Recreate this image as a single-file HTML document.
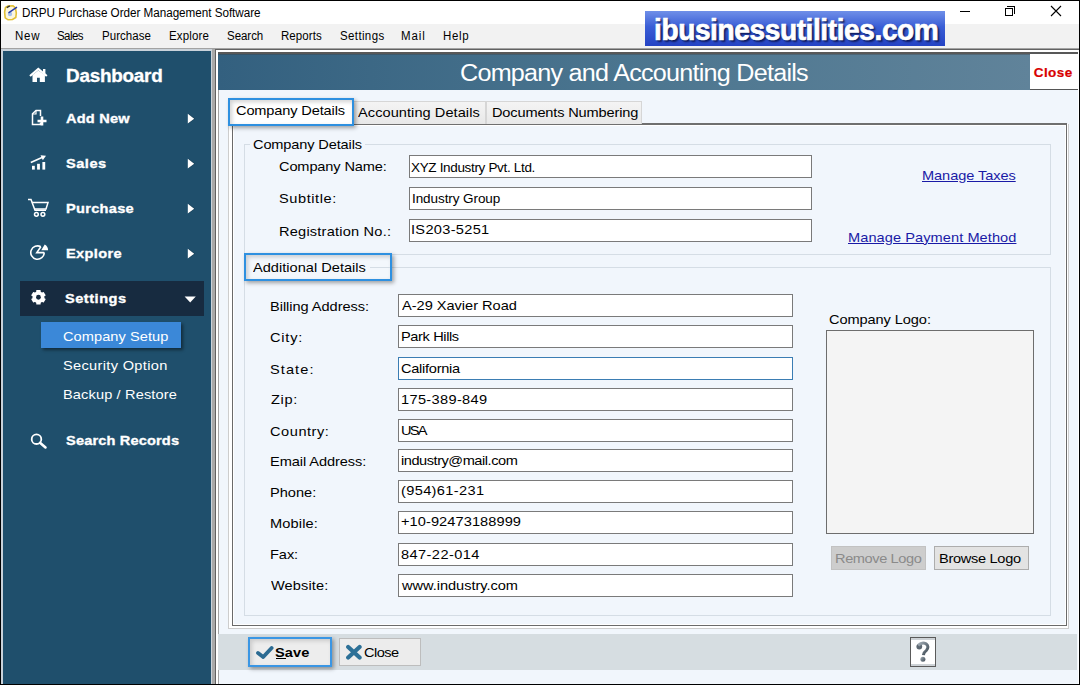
<!DOCTYPE html>
<html><head><meta charset="utf-8">
<style>
*{box-sizing:border-box;margin:0;padding:0}
html,body{width:1080px;height:685px;overflow:hidden;background:#fff}
body{position:relative;font-family:"Liberation Sans", sans-serif}
.a{position:absolute}
.t{position:absolute;white-space:pre;line-height:1;font-family:"Liberation Sans", sans-serif}
.inp{position:absolute;background:#fff;border:1px solid #7a7a7a}
</style></head><body>
<!-- frame -->
<div class="a" style="left:0;top:0;width:1080px;height:685px;background:#000"></div>
<div class="a" style="left:1px;top:1px;width:1078px;height:23px;background:#fff"></div>
<div class="a" style="left:1px;top:24px;width:1078px;height:24px;background:#f2f2f2"></div>
<div class="a" style="left:1px;top:48px;width:1078px;height:1px;background:#a3a3a3"></div>
<div class="a" style="left:1px;top:49px;width:1078px;height:635px;background:#c9d2da"></div>
<!-- sidebar -->
<div class="a" style="left:3px;top:51px;width:208px;height:633px;background:#1f4f6c"></div>
<div class="a" style="left:212px;top:49px;width:3px;height:635px;background:#a9a9a9"></div>
<div class="a" style="left:215px;top:49px;width:864px;height:635px;background:#626262"></div>
<div class="a" style="left:216px;top:50px;width:863px;height:634px;background:#fff"></div>
<!-- main content -->
<div class="a" style="left:218px;top:53px;width:860px;height:631px;background:#f1f6fc"></div>
<div class="a" style="left:218px;top:52px;width:812px;height:38px;background:linear-gradient(90deg,#33607f 0%,#4b758f 50%,#60839a 100%)"></div>
<div class="a" style="left:218px;top:52px;width:860px;height:2px;background:#585858"></div>
<div class="a" style="left:218px;top:54px;width:860px;height:1px;background:rgba(60,60,60,.35)"></div>
<div class="a" style="left:1030px;top:54px;width:48px;height:36px;background:#fff;border-bottom:1px solid #555"></div>
<div class="a" style="left:218px;top:90px;width:1px;height:594px;background:#a4a4a4"></div>
<!-- tab panel -->
<div class="a" style="left:228px;top:124px;width:841px;height:505px;border:1px solid #cdcdcd;border-top:none;background:#fff"></div>
<div class="a" style="left:232px;top:123px;width:835px;height:503px;border:1px solid #6a6a6a;border-top:2px solid #6f6f6f;background:#f1f6fc;box-shadow:inset 1px 1px 0 #fff, inset -1px -1px 0 #fff"></div>
<!-- tabs -->
<div class="a" style="left:353px;top:101px;width:133px;height:23px;background:linear-gradient(#f4f4f4,#e8e8e8);border:1px solid #d6d6d6;border-bottom:none"></div>
<div class="a" style="left:486px;top:101px;width:156px;height:23px;background:linear-gradient(#f4f4f4,#e8e8e8);border:1px solid #d6d6d6;border-bottom:none"></div>
<div class="a" style="left:228px;top:98px;width:126px;height:28px;background:#fff;border:2.5px solid #2e90e0;box-shadow:2px 2px 4px rgba(0,0,0,.35), inset 2px 2px 4px rgba(0,0,0,.18)"></div>
<!-- group boxes -->
<div class="a" style="left:244px;top:144px;width:807px;height:111px;border:1px solid #d5dde5"></div>
<div class="a" style="left:250px;top:140px;width:115px;height:8px;background:#f1f6fc"></div>
<div class="a" style="left:244px;top:267px;width:807px;height:349px;border:1px solid #d5dde5"></div>
<div class="a" style="left:244px;top:253px;width:148px;height:28px;background:#f3f7fc;border:2.5px solid #2e90e0;box-shadow:2px 2px 4px rgba(0,0,0,.35), inset 2px 2px 4px rgba(0,0,0,.18)"></div>
<div class="a" style="left:370px;top:267px;width:20px;height:1px;background:#d5dde5"></div>
<!-- company inputs -->
<div class="inp" style="left:409px;top:155px;width:403px;height:23px"></div>
<div class="inp" style="left:409px;top:187px;width:403px;height:23px"></div>
<div class="inp" style="left:409px;top:219px;width:403px;height:23px"></div>
<!-- additional inputs -->
<div class="inp" style="left:398px;top:294px;width:395px;height:23px"></div>
<div class="inp" style="left:398px;top:325px;width:395px;height:23px"></div>
<div class="inp" style="left:398px;top:357px;width:395px;height:23px;border-color:#3b7db3"></div>
<div class="inp" style="left:398px;top:388px;width:395px;height:23px"></div>
<div class="inp" style="left:398px;top:419px;width:395px;height:23px"></div>
<div class="inp" style="left:398px;top:449px;width:395px;height:23px"></div>
<div class="inp" style="left:398px;top:480px;width:395px;height:23px"></div>
<div class="inp" style="left:398px;top:511px;width:395px;height:23px"></div>
<div class="inp" style="left:398px;top:543px;width:395px;height:23px"></div>
<div class="inp" style="left:398px;top:574px;width:395px;height:23px"></div>
<!-- logo -->
<div class="a" style="left:826px;top:330px;width:208px;height:204px;background:#f4f4f4;border:1px solid #6d6d6d"></div>
<div class="a" style="left:831px;top:546px;width:95px;height:24px;background:#cdcdcd;border:1px solid #c2c2c2"></div>
<div class="a" style="left:934px;top:546px;width:95px;height:24px;background:#e3e3e3;border:1px solid #adadad"></div>
<!-- bottom bar -->
<div class="a" style="left:218px;top:634px;width:859px;height:36px;background:#d6dde1"></div>
<div class="a" style="left:248px;top:637px;width:84px;height:30px;background:#ededed;border:2.5px solid #3a96e4;box-shadow:2px 2px 4px rgba(0,0,0,.35), inset 2px 2px 4px rgba(0,0,0,.15)"></div>
<div class="a" style="left:339px;top:638px;width:82px;height:28px;background:#ececec;border:1px solid #bdbdbd"></div>
<div class="a" style="left:910px;top:637px;width:26px;height:30px;background:#fff;border:1px solid #5a5a5a"></div>
<!-- sidebar highlights -->
<div class="a" style="left:20px;top:281px;width:184px;height:35px;background:#172b40"></div>
<div class="a" style="left:41px;top:322px;width:140px;height:26px;background:#3b88d8;box-shadow:2px 2px 3px rgba(0,0,0,.45)"></div>
<!-- logo banner -->
<div class="a" style="left:645px;top:11px;width:300px;height:35px;background:linear-gradient(#6f8fe8,#3a5ed6 45%,#2443c4)"></div>
<!-- window controls -->
<div class="a" style="left:960px;top:11px;width:10px;height:1px;background:#000"></div>
<div class="a" style="left:1005px;top:8px;width:8px;height:8px;border:1px solid #000"></div>
<div class="a" style="left:1007px;top:6px;width:8px;height:8px;border-top:1px solid #000;border-right:1px solid #000"></div>
<svg class="a" style="left:1050px;top:5px" width="12" height="12" viewBox="0 0 12 12"><path d="M1 1L11 11M11 1L1 11" stroke="#000" stroke-width="1.1"/></svg>

<!-- app icon -->
<svg class="a" style="left:2px;top:3px" width="17" height="18" viewBox="0 0 17 18">
<path d="M3.5 4.5 L6 3 L11 2.8 L13.5 5 L14.3 10 L13.8 14.5 L10.5 16.5 L6 16.8 L3.2 14.8 L2.6 9Z" fill="#fbf6e0" stroke="#e2c035" stroke-width="1.6"/>
<path d="M4.8 4.6 L7.8 2.8" stroke="#333" stroke-width="1.4"/>
<circle cx="8" cy="11" r="2.2" fill="#a9c3ec"/>
<path d="M6.5 9.8 L15 4.2" stroke="#2438a8" stroke-width="1.4"/>
</svg>
<!-- sidebar icons -->
<svg class="a" style="left:28px;top:66px" width="22" height="18" viewBox="0 0 22 18">
<path d="M2 10 L10.3 3 L18.8 10" fill="none" stroke="#fff" stroke-width="2.2" stroke-linejoin="miter"/>
<rect x="15" y="3" width="2.4" height="5" fill="#fff"/>
<path d="M4.5 9 L10.3 4.6 L16.9 9 L16.9 16 L11.8 16 L11.8 11.8 L9 11.8 L9 16 L4.5 16Z" fill="#fff"/>
</svg>
<svg class="a" style="left:30px;top:108px" width="20" height="20" viewBox="0 0 20 20">
<path d="M10.5 14.5 L10.5 16.5 L2.5 16.5 L2.5 5.8 L6 2.5 L10.5 2.5 L10.5 8" fill="none" stroke="#fff" stroke-width="1.5"/>
<path d="M2.5 6 L6 6 L6 2.5" fill="none" stroke="#fff" stroke-width="1.2"/>
<path d="M12 8.5 L12 17.5 M7.5 13 L16.5 13" stroke="#fff" stroke-width="2.6"/>
</svg>
<svg class="a" style="left:29px;top:154px" width="20" height="18" viewBox="0 0 20 18">
<rect x="3" y="11.8" width="2.8" height="3.8" fill="#fff"/>
<rect x="8.1" y="9.8" width="2.8" height="5.8" fill="#fff"/>
<rect x="13.4" y="8" width="2.8" height="7.6" fill="#fff"/>
<path d="M1.8 8.5 L13 3.6" stroke="#fff" stroke-width="1.6"/>
<path d="M11.5 1.2 L17 1.8 L13.8 6.2Z" fill="#fff"/>
</svg>
<svg class="a" style="left:26px;top:197px" width="24" height="22" viewBox="0 0 24 22">
<path d="M2 2.5 L5 2.5 L9 13.2 L20 13.2" fill="none" stroke="#fff" stroke-width="1.5"/>
<path d="M5.8 5.6 L22 5.6 L20 12 L8.2 12" fill="none" stroke="#fff" stroke-width="1.5"/>
<circle cx="10.4" cy="17.3" r="1.9" fill="none" stroke="#fff" stroke-width="1.5"/>
<circle cx="16.9" cy="17.3" r="1.9" fill="none" stroke="#fff" stroke-width="1.5"/>
</svg>
<svg class="a" style="left:27px;top:242px" width="24" height="22" viewBox="0 0 24 22">
<path d="M13.85 4.8 A6.7 6.7 0 1 0 17.2 10.6" fill="none" stroke="#fff" stroke-width="1.6"/>
<path d="M13.85 4.8 L9.8 10.6 L17.2 10.6" fill="none" stroke="#fff" stroke-width="1.6" stroke-linejoin="miter"/>
<path d="M14.3 8.3 L21.1 8.3 A6.8 6.8 0 0 0 17.7 2.4Z" fill="#fff"/>
</svg>
<svg class="a" style="left:29px;top:288px" width="19" height="19" viewBox="0 0 19 19">
<g transform="translate(9.45,9.25)" fill="#fff">
<rect x="-2.2" y="-7.2" width="4.4" height="14.4" rx="0.5"/>
<rect x="-2.2" y="-7.2" width="4.4" height="14.4" rx="0.5" transform="rotate(60)"/>
<rect x="-2.2" y="-7.2" width="4.4" height="14.4" rx="0.5" transform="rotate(120)"/>
<circle r="5.9"/>
</g>
<circle cx="9.45" cy="9.25" r="2.4" fill="#172b40"/>
</svg>
<svg class="a" style="left:28px;top:432px" width="22" height="20" viewBox="0 0 22 20">
<circle cx="8.5" cy="7.2" r="4.8" fill="none" stroke="#fff" stroke-width="1.8"/>
<path d="M12 10.8 L17.5 15.4" stroke="#fff" stroke-width="2.6" stroke-linecap="round"/>
</svg>
<!-- arrows -->
<svg class="a" style="left:186px;top:112px" width="10" height="14" viewBox="0 0 10 14"><path d="M2.6 1.8 L9 6.7 L2.6 11.6Z" fill="#0f2a3d" opacity=".55"/><path d="M1.8 1.8 L8.2 6.7 L1.8 11.6Z" fill="#fff"/></svg>
<svg class="a" style="left:186px;top:157px" width="10" height="14" viewBox="0 0 10 14"><path d="M2.6 1.8 L9 6.7 L2.6 11.6Z" fill="#0f2a3d" opacity=".55"/><path d="M1.8 1.8 L8.2 6.7 L1.8 11.6Z" fill="#fff"/></svg>
<svg class="a" style="left:186px;top:202px" width="10" height="14" viewBox="0 0 10 14"><path d="M2.6 1.8 L9 6.7 L2.6 11.6Z" fill="#0f2a3d" opacity=".55"/><path d="M1.8 1.8 L8.2 6.7 L1.8 11.6Z" fill="#fff"/></svg>
<svg class="a" style="left:186px;top:247px" width="10" height="14" viewBox="0 0 10 14"><path d="M2.6 1.8 L9 6.7 L2.6 11.6Z" fill="#0f2a3d" opacity=".55"/><path d="M1.8 1.8 L8.2 6.7 L1.8 11.6Z" fill="#fff"/></svg>
<svg class="a" style="left:183px;top:294px" width="14" height="10" viewBox="0 0 14 10"><path d="M1.6 2.5 L12.8 2.5 L7.2 8.6Z" fill="#fff"/></svg>
<!-- save / close icons -->
<svg class="a" style="left:255px;top:645px" width="19" height="15" viewBox="0 0 19 15">
<path d="M3 7.9 L8.2 12 L16.6 3" fill="none" stroke="#2c6b92" stroke-width="3.8" stroke-linecap="round" stroke-linejoin="round"/>
</svg>
<svg class="a" style="left:345px;top:644px" width="18" height="16" viewBox="0 0 18 16">
<path d="M3.2 3 L14.6 13.5 M14.6 3 L3.2 13.5" stroke="#2c7097" stroke-width="4.2" stroke-linecap="round"/>
</svg>
<div class="a" style="left:276px;top:658px;width:10px;height:1px;background:#000"></div>
<!-- help icon -->
<div class="a" style="left:911px;top:638px;width:24px;height:28px;border-top:2px solid #cdd2d6;border-bottom:2px solid #cdd2d6"></div>
<svg class="a" style="left:914px;top:641px" width="18" height="22" viewBox="0 0 18 22">
<defs><linearGradient id="hg" x1="0" y1="0" x2="1" y2="1"><stop offset="0" stop-color="#a4aeb6"/><stop offset="0.5" stop-color="#6c7882"/><stop offset="1" stop-color="#3e4a54"/></linearGradient></defs>
<circle cx="5.3" cy="5.6" r="2.9" fill="#5d6872"/>
<path d="M4.2 4.4 Q8 0.6 12 2.8 Q15.6 5.6 12.4 9.4 Q9.6 11.4 9.4 14.2" fill="none" stroke="url(#hg)" stroke-width="3"/>
<circle cx="8.9" cy="18.3" r="2.5" fill="url(#hg)"/>
</svg>
<div class="t" style="left:22.30px;top:6.59px;font-size:12.3px;font-weight:400;color:#000;letter-spacing:-0.028px;transform:scaleX(0.95);transform-origin:0 0;">DRPU Purchase Order Management Software</div>
<div class="t" style="left:654.00px;top:16.45px;font-size:29px;font-weight:700;color:#fff;letter-spacing:-0.442px;transform:scaleX(0.97);transform-origin:0 0;text-shadow:1px 1px 1px #0a1a60,2px 2px 2px rgba(0,0,30,.6);-webkit-text-stroke:0.7px #fff">ibusinessutilities.com</div>
<div class="t" style="left:14.60px;top:29.92px;font-size:12.5px;font-weight:400;color:#000;letter-spacing:0.870px;transform:scaleX(0.92);transform-origin:0 0;">New</div>
<div class="t" style="left:57.30px;top:29.92px;font-size:12.5px;font-weight:400;color:#000;letter-spacing:-0.598px;transform:scaleX(0.92);transform-origin:0 0;">Sales</div>
<div class="t" style="left:102.20px;top:29.92px;font-size:12.5px;font-weight:400;color:#000;letter-spacing:0.062px;transform:scaleX(0.92);transform-origin:0 0;">Purchase</div>
<div class="t" style="left:169.30px;top:29.92px;font-size:12.5px;font-weight:400;color:#000;letter-spacing:0.145px;transform:scaleX(0.92);transform-origin:0 0;">Explore</div>
<div class="t" style="left:227.20px;top:29.92px;font-size:12.5px;font-weight:400;color:#000;letter-spacing:-0.043px;transform:scaleX(0.92);transform-origin:0 0;">Search</div>
<div class="t" style="left:281.20px;top:29.92px;font-size:12.5px;font-weight:400;color:#000;letter-spacing:0.072px;transform:scaleX(0.92);transform-origin:0 0;">Reports</div>
<div class="t" style="left:339.70px;top:29.92px;font-size:12.5px;font-weight:400;color:#000;letter-spacing:0.404px;transform:scaleX(0.92);transform-origin:0 0;">Settings</div>
<div class="t" style="left:400.90px;top:29.92px;font-size:12.5px;font-weight:400;color:#000;letter-spacing:1.014px;transform:scaleX(0.92);transform-origin:0 0;">Mail</div>
<div class="t" style="left:443.00px;top:29.92px;font-size:12.5px;font-weight:400;color:#000;letter-spacing:0.725px;transform:scaleX(0.92);transform-origin:0 0;">Help</div>
<div class="t" style="left:65.60px;top:67.69px;font-size:17.5px;font-weight:700;color:#fff;letter-spacing:-0.231px;transform:scaleX(1.08);transform-origin:0 0;-webkit-text-stroke:0.3px #fff">Dashboard</div>
<div class="t" style="left:65.60px;top:112.07px;font-size:13.5px;font-weight:700;color:#fff;letter-spacing:0.185px;transform:scaleX(1.08);transform-origin:0 0;-webkit-text-stroke:0.35px #fff">Add New</div>
<div class="t" style="left:65.50px;top:156.87px;font-size:13.5px;font-weight:700;color:#fff;letter-spacing:0.463px;transform:scaleX(1.08);transform-origin:0 0;-webkit-text-stroke:0.35px #fff">Sales</div>
<div class="t" style="left:65.50px;top:201.87px;font-size:13.5px;font-weight:700;color:#fff;letter-spacing:0.265px;transform:scaleX(1.08);transform-origin:0 0;-webkit-text-stroke:0.35px #fff">Purchase</div>
<div class="t" style="left:65.50px;top:246.57px;font-size:13.5px;font-weight:700;color:#fff;letter-spacing:0.340px;transform:scaleX(1.08);transform-origin:0 0;-webkit-text-stroke:0.35px #fff">Explore</div>
<div class="t" style="left:65.00px;top:291.87px;font-size:13.5px;font-weight:700;color:#fff;letter-spacing:0.476px;transform:scaleX(1.08);transform-origin:0 0;-webkit-text-stroke:0.35px #fff">Settings</div>
<div class="t" style="left:63.40px;top:329.57px;font-size:13.5px;font-weight:400;color:#fff;letter-spacing:0.062px;transform:scaleX(1.08);transform-origin:0 0;">Company Setup</div>
<div class="t" style="left:63.40px;top:358.87px;font-size:13.5px;font-weight:400;color:#fff;letter-spacing:0.304px;transform:scaleX(1.08);transform-origin:0 0;">Security Option</div>
<div class="t" style="left:63.40px;top:388.37px;font-size:13.5px;font-weight:400;color:#fff;letter-spacing:0.123px;transform:scaleX(1.08);transform-origin:0 0;">Backup / Restore</div>
<div class="t" style="left:65.50px;top:434.37px;font-size:13.5px;font-weight:700;color:#fff;letter-spacing:0.142px;transform:scaleX(1.08);transform-origin:0 0;-webkit-text-stroke:0.35px #fff">Search Records</div>
<div class="t" style="left:460.30px;top:61.68px;font-size:23.3px;font-weight:400;color:#fff;letter-spacing:-0.702px;transform:scaleX(1.08);transform-origin:0 0;">Company and Accounting Details</div>
<div class="t" style="left:1033.70px;top:65.87px;font-size:13.5px;font-weight:700;color:#d80000;letter-spacing:0.450px;-webkit-text-stroke:0.2px #d80000">Close</div>
<div class="t" style="left:235.50px;top:103.87px;font-size:13.5px;font-weight:400;color:#000;letter-spacing:-0.132px;transform:scaleX(1.08);transform-origin:0 0;">Company Details</div>
<div class="t" style="left:357.80px;top:105.97px;font-size:13.5px;font-weight:400;color:#000;letter-spacing:0.054px;transform:scaleX(1.08);transform-origin:0 0;">Accounting Details</div>
<div class="t" style="left:491.60px;top:105.97px;font-size:13.5px;font-weight:400;color:#000;letter-spacing:-0.144px;transform:scaleX(1.08);transform-origin:0 0;">Documents Numbering</div>
<div class="t" style="left:252.60px;top:137.57px;font-size:13.5px;font-weight:400;color:#000;letter-spacing:-0.132px;transform:scaleX(1.08);transform-origin:0 0;">Company Details</div>
<div class="t" style="left:278.60px;top:160.27px;font-size:13.5px;font-weight:400;color:#000;letter-spacing:-0.123px;transform:scaleX(1.08);transform-origin:0 0;">Company Name:</div>
<div class="t" style="left:278.60px;top:191.97px;font-size:13.5px;font-weight:400;color:#000;letter-spacing:0.532px;transform:scaleX(1.08);transform-origin:0 0;">Subtitle:</div>
<div class="t" style="left:278.60px;top:224.57px;font-size:13.5px;font-weight:400;color:#000;letter-spacing:0.197px;transform:scaleX(1.08);transform-origin:0 0;">Registration No.:</div>
<div class="t" style="left:411.00px;top:161.37px;font-size:13.5px;font-weight:400;color:#000;letter-spacing:-0.333px;">XYZ Industry Pvt. Ltd.</div>
<div class="t" style="left:412.00px;top:192.47px;font-size:13.5px;font-weight:400;color:#000;letter-spacing:-0.077px;">Industry Group</div>
<div class="t" style="left:411.00px;top:223.47px;font-size:13.5px;font-weight:400;color:#000;letter-spacing:0.288px;transform:scaleX(1.08);transform-origin:0 0;">IS203-5251</div>
<div class="t" style="left:922.00px;top:168.77px;font-size:13.5px;font-weight:400;color:#1a1aa6;letter-spacing:-0.067px;transform:scaleX(1.08);transform-origin:0 0;text-decoration:underline">Manage Taxes</div>
<div class="t" style="left:848.40px;top:230.77px;font-size:13.5px;font-weight:400;color:#1a1aa6;letter-spacing:0.065px;transform:scaleX(1.08);transform-origin:0 0;text-decoration:underline">Manage Payment Method</div>
<div class="t" style="left:253.10px;top:260.67px;font-size:13.5px;font-weight:400;color:#000;letter-spacing:0.011px;transform:scaleX(1.08);transform-origin:0 0;">Additional Details</div>
<div class="t" style="left:270.10px;top:300.17px;font-size:13.5px;font-weight:400;color:#000;letter-spacing:-0.037px;transform:scaleX(1.08);transform-origin:0 0;">Billing Address:</div>
<div class="t" style="left:270.10px;top:330.97px;font-size:13.5px;font-weight:400;color:#000;letter-spacing:0.741px;transform:scaleX(1.08);transform-origin:0 0;">City:</div>
<div class="t" style="left:270.10px;top:362.67px;font-size:13.5px;font-weight:400;color:#000;letter-spacing:1.000px;transform:scaleX(1.08);transform-origin:0 0;">State:</div>
<div class="t" style="left:271.10px;top:393.47px;font-size:13.5px;font-weight:400;color:#000;letter-spacing:0.617px;transform:scaleX(1.08);transform-origin:0 0;">Zip:</div>
<div class="t" style="left:270.10px;top:424.57px;font-size:13.5px;font-weight:400;color:#000;letter-spacing:0.503px;transform:scaleX(1.08);transform-origin:0 0;">Country:</div>
<div class="t" style="left:270.10px;top:454.57px;font-size:13.5px;font-weight:400;color:#000;letter-spacing:-0.071px;transform:scaleX(1.08);transform-origin:0 0;">Email Address:</div>
<div class="t" style="left:270.10px;top:485.77px;font-size:13.5px;font-weight:400;color:#000;letter-spacing:0.000px;transform:scaleX(1.08);transform-origin:0 0;">Phone:</div>
<div class="t" style="left:270.10px;top:516.77px;font-size:13.5px;font-weight:400;color:#000;letter-spacing:0.123px;transform:scaleX(1.08);transform-origin:0 0;">Mobile:</div>
<div class="t" style="left:270.10px;top:548.17px;font-size:13.5px;font-weight:400;color:#000;letter-spacing:-0.062px;transform:scaleX(1.08);transform-origin:0 0;">Fax:</div>
<div class="t" style="left:271.10px;top:579.37px;font-size:13.5px;font-weight:400;color:#000;letter-spacing:0.106px;transform:scaleX(1.08);transform-origin:0 0;">Website:</div>
<div class="t" style="left:401.70px;top:298.77px;font-size:13.5px;font-weight:400;color:#000;letter-spacing:-0.012px;transform:scaleX(1.08);transform-origin:0 0;">A-29 Xavier Road</div>
<div class="t" style="left:400.70px;top:329.57px;font-size:13.5px;font-weight:400;color:#000;letter-spacing:-0.350px;transform:scaleX(1.08);transform-origin:0 0;">Park Hills</div>
<div class="t" style="left:400.70px;top:361.57px;font-size:13.5px;font-weight:400;color:#000;letter-spacing:-0.247px;transform:scaleX(1.08);transform-origin:0 0;">California</div>
<div class="t" style="left:400.70px;top:392.67px;font-size:13.5px;font-weight:400;color:#000;letter-spacing:0.315px;transform:scaleX(1.08);transform-origin:0 0;">175-389-849</div>
<div class="t" style="left:400.70px;top:423.77px;font-size:13.5px;font-weight:400;color:#000;letter-spacing:-1.574px;transform:scaleX(1.08);transform-origin:0 0;">USA</div>
<div class="t" style="left:400.70px;top:453.77px;font-size:13.5px;font-weight:400;color:#000;letter-spacing:-0.428px;transform:scaleX(1.08);transform-origin:0 0;">industry@mail.com</div>
<div class="t" style="left:400.70px;top:484.37px;font-size:13.5px;font-weight:400;color:#000;letter-spacing:0.333px;transform:scaleX(1.08);transform-origin:0 0;">(954)61-231</div>
<div class="t" style="left:400.70px;top:515.47px;font-size:13.5px;font-weight:400;color:#000;letter-spacing:0.079px;transform:scaleX(1.08);transform-origin:0 0;">+10-92473188999</div>
<div class="t" style="left:400.70px;top:547.67px;font-size:13.5px;font-weight:400;color:#000;letter-spacing:0.391px;transform:scaleX(1.08);transform-origin:0 0;">847-22-014</div>
<div class="t" style="left:401.70px;top:578.77px;font-size:13.5px;font-weight:400;color:#000;letter-spacing:-0.025px;transform:scaleX(1.08);transform-origin:0 0;">www.industry.com</div>
<div class="t" style="left:828.50px;top:312.97px;font-size:13.5px;font-weight:400;color:#000;letter-spacing:-0.077px;transform:scaleX(1.08);transform-origin:0 0;">Company Logo:</div>
<div class="t" style="left:835.00px;top:551.57px;font-size:13.5px;font-weight:400;color:#8a8a8a;letter-spacing:-0.370px;transform:scaleX(1.08);transform-origin:0 0;">Remove Logo</div>
<div class="t" style="left:939.00px;top:551.57px;font-size:13.5px;font-weight:400;color:#000;letter-spacing:-0.278px;transform:scaleX(1.08);transform-origin:0 0;">Browse Logo</div>
<div class="t" style="left:275.00px;top:645.57px;font-size:13.5px;font-weight:700;color:#000;letter-spacing:0.062px;transform:scaleX(1.08);transform-origin:0 0;">Save</div>
<div class="t" style="left:364.30px;top:645.57px;font-size:13.5px;font-weight:400;color:#000;letter-spacing:-0.509px;transform:scaleX(1.08);transform-origin:0 0;">Close</div>
</body></html>
